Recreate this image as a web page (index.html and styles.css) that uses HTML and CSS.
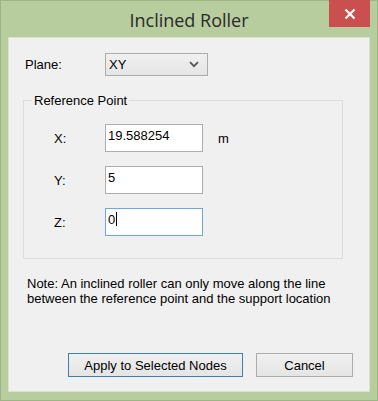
FILE: index.html
```html
<!DOCTYPE html>
<html>
<head>
<meta charset="utf-8">
<link rel="stylesheet" href="styles.css">
</head>
<body>
<div class="window">
  <div class="titlebar">
    <div class="title">Inclined Roller</div>
    <div class="close">
      <svg width="12" height="12" viewBox="0 0 12 12"><path d="M1.5 1.5 L10.5 10.5 M10.5 1.5 L1.5 10.5" stroke="#fff" stroke-width="2.2" fill="none"/></svg>
    </div>
  </div>
  <div class="client">
    <div class="plane-row">
      <span class="plane-label">Plane:</span>
      <div class="combo">
        <span>XY</span>
        <svg class="chev" width="10" height="7" viewBox="0 0 10 7"><path d="M1 1.2 L5 5.2 L9 1.2" stroke="#555" stroke-width="1.8" fill="none"/></svg>
      </div>
    </div>
    <fieldset class="group">
      <legend>Reference Point</legend>
      <div class="field first">
        <span class="flabel">X:</span>
        <div class="input">19.588254</div>
        <span class="unit">m</span>
      </div>
      <div class="field">
        <span class="flabel">Y:</span>
        <div class="input">5</div>
      </div>
      <div class="field">
        <span class="flabel">Z:</span>
        <div class="input focus">0<span class="caret"></span></div>
      </div>
    </fieldset>
    <p class="note">Note: An inclined roller can only move along the line<br>between the reference point and the support location</p>
    <div class="buttons">
      <button class="btn default">Apply to Selected Nodes</button>
      <button class="btn cancel">Cancel</button>
    </div>
  </div>
</div>
</body>
</html>
```
FILE: styles.css
```css
html, body {
  margin: 0;
  padding: 0;
}
body {
  width: 378px;
  height: 401px;
  font-family: "Liberation Sans", Arial, sans-serif;
  font-size: 13px;
  color: #000;
}
.window {
  box-sizing: border-box;
  width: 378px;
  height: 401px;
  background: #b8cd9e;
  border: 1px solid #9fb486;
  display: flex;
  flex-direction: column;
}
.titlebar {
  height: 36px;
  position: relative;
}
.title {
  text-align: center;
  font-family: "Open Sans", "Noto Sans", sans-serif;
  font-size: 18px;
  line-height: 22px;
  padding-top: 8px;
  color: #2a2a2a;
}
.close {
  position: absolute;
  top: -1px;
  right: 7px;
  width: 41px;
  height: 27px;
  background: #c9504f;
  display: flex;
  align-items: center;
  justify-content: center;
}
.client {
  flex: 1;
  margin: 0 7px 8px 7px;
  background: #f0f0f0;
  border: 1px solid #d8e3cb;
  display: flex;
  flex-direction: column;
}
.plane-row {
  display: flex;
  align-items: center;
  margin-top: 15px;
  padding-left: 16px;
}
.plane-label {
  width: 80px;
}
.combo {
  box-sizing: border-box;
  width: 103px;
  height: 23px;
  border: 1px solid #acacac;
  background: linear-gradient(#f0f0f0, #e5e5e5);
  display: flex;
  align-items: center;
  justify-content: space-between;
  padding: 0 8px 0 3px;
}
.chev {
  display: block;
}
.group {
  margin: 17px 0 0 14px;
  width: 320px;
  height: 166px;
  box-sizing: border-box;
  border: 1px solid #dcdcdc;
  padding: 0;
}
.group legend {
  margin-left: 8px;
  padding: 0 2px;
  line-height: 15px;
}
.field {
  display: flex;
  align-items: center;
  height: 28px;
  margin-top: 14px;
}
.field.first {
  margin-top: 16px;
}
.flabel {
  padding-left: 30px;
  box-sizing: border-box;
  width: 81px;
}
.input {
  box-sizing: border-box;
  width: 98px;
  height: 28px;
  background: #fff;
  border: 1px solid #abadb3;
  padding: 3px 0 0 2px;
  line-height: 15px;
}
.input.focus {
  border-color: #6fa6df;
}
.caret {
  display: inline-block;
  width: 1px;
  height: 14px;
  background: #000;
  vertical-align: -2px;
  margin-left: 1px;
}
.unit {
  margin-left: 15px;
}
.note {
  margin: 17px 0 0 18px;
  line-height: 15px;
}
.buttons {
  margin-top: auto;
  margin-bottom: 14px;
  display: flex;
  padding-left: 59px;
  gap: 13px;
}
.btn {
  box-sizing: border-box;
  height: 24px;
  font-family: "Liberation Sans", Arial, sans-serif;
  font-size: 13px;
  color: #000;
  background: linear-gradient(#f0f0f0, #e5e5e5);
  border: 1px solid #acacac;
  padding: 0;
}
.btn.default {
  width: 175px;
  border-color: #3c7fb1;
}
.btn.cancel {
  width: 97px;
}
```
